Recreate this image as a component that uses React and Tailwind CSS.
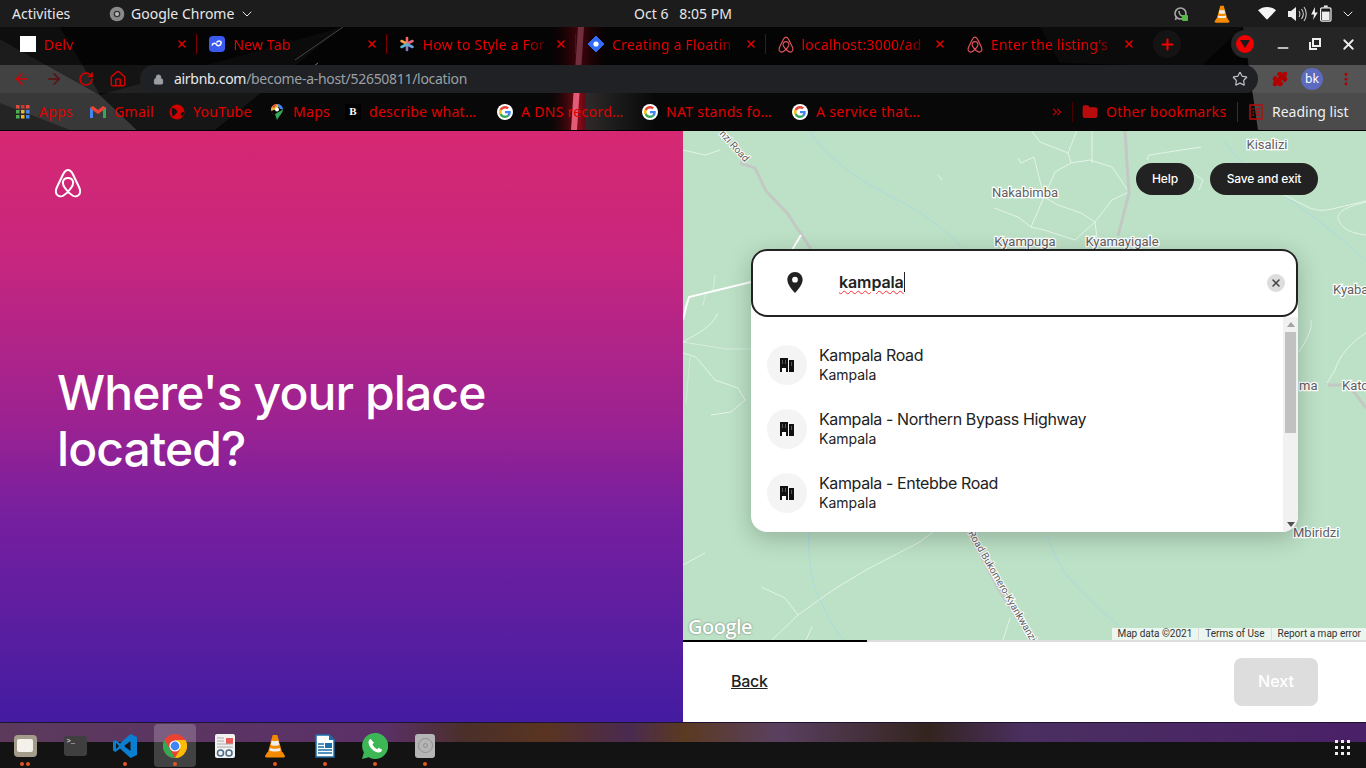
import { ArrowLeft, ArrowRight, RotateCw, House, Lock, Star, Puzzle, EllipsisVertical, Plus, X, Minus, ChevronDown, Folder, ChevronsRight } from 'lucide-react';

const uiFont = { fontFamily: '"Noto Sans", sans-serif' };

function Belo({ className, stroke = 'currentColor', width = 2 }) {
  return (
    <svg viewBox="0 0 28 30" className={className} fill="none" stroke={stroke} strokeWidth={width}>
      <path d="M14 2C11.5 2 10.5 3.5 9 6.5L3 19C1.5 22 1.5 24 2.5 26C4 28.5 7 29 9.5 27.5C12 26 15 23 17 20C19 17.5 19.5 15.5 19 13.5C18.5 11.5 16.5 10 14 10C11.5 10 9.5 11.5 9 13.5C8.5 15.5 9 17.5 11 20C13 23 16 26 18.5 27.5C21 29 24 28.5 25.5 26C26.5 24 26.5 22 25 19L19 6.5C17.5 3.5 16.5 2 14 2Z" />
    </svg>
  );
}

function GoogleIcon() {
  return (
    <span className="flex h-4 w-4 items-center justify-center rounded-full bg-white">
      <svg viewBox="0 0 48 48" className="h-3 w-3">
        <path fill="#EA4335" d="M24 9.5c3.54 0 6.71 1.22 9.21 3.6l6.85-6.85C35.9 2.38 30.47 0 24 0 14.62 0 6.51 5.38 2.56 13.22l7.98 6.19C12.43 13.72 17.74 9.5 24 9.5z" />
        <path fill="#4285F4" d="M46.98 24.55c0-1.57-.15-3.09-.38-4.55H24v9.02h12.94c-.58 2.96-2.26 5.48-4.78 7.18l7.73 6c4.51-4.18 7.09-10.36 7.09-17.65z" />
        <path fill="#FBBC05" d="M10.53 28.59c-.48-1.45-.76-2.99-.76-4.59s.27-3.14.76-4.59l-7.98-6.19C.92 16.46 0 20.12 0 24c0 3.88.92 7.54 2.56 10.78l7.97-6.19z" />
        <path fill="#34A853" d="M24 48c6.48 0 11.93-2.13 16.06-5.81l-7.73-6c-2.15 1.45-4.92 2.3-8.33 2.3-6.26 0-11.57-4.22-13.47-9.91l-7.98 6.19C6.51 42.62 14.62 48 24 48z" />
      </svg>
    </span>
  );
}

function VlcCone({ className }) {
  return (
    <svg viewBox="0 0 24 24" className={className}>
      <path fill="#f58a00" d="M2 22l2.5-4h15l2.5 4c0 1-1 1.500-2 1.500H4c-1 0-2-.5-2-1.500z" />
      <path fill="#f58a00" d="M9.700 1h4.600l5 18c-3 2-11.600 2-14.600 0z" />
      <path fill="#eee" d="M8.700 6.500c1.500.8 5 .8 6.600 0l1 4.500c-2 1-6.600 1-8.600 0zM7 14c1.800 1 8 1 10 0l.6 2.500c-2.500 1.300-8.800 1.300-11.200 0z" />
    </svg>
  );
}

function ChromeLogo({ className }) {
  return (
    <svg viewBox="0 0 24 24" className={className}>
      <circle cx="12" cy="12" r="12" fill="#ea4335" />
      <path fill="#34a853" d="M12 24A12 12 0 0 1 1.600 6l5.200 9 5.200 9z" />
      <path fill="#fbbc05" d="M12 24l5.200-9L12 6h10.400A12 12 0 0 1 12 24z" />
      <circle cx="12" cy="12" r="5.600" fill="#fff" />
      <circle cx="12" cy="12" r="4.400" fill="#4285f4" />
    </svg>
  );
}

function TopBar() {
  return (
    <div style={uiFont} className="flex h-[27px] items-center bg-[#1c1c1c] text-[14px] text-[#e8e8e8]">
      <span className="ml-3 w-[85px]">Activities</span>
      <svg viewBox="0 0 24 24" className="ml-[12px] h-4 w-4">
        <circle cx="12" cy="12" r="11" fill="#8a8a8a" />
        <circle cx="12" cy="12" r="5" fill="#333" />
        <circle cx="12" cy="12" r="3" fill="#bbb" />
      </svg>
      <span className="ml-[6px] w-[108px]">Google Chrome</span>
      <ChevronDown className="h-4 w-4" strokeWidth={1.5} />
      <span className="ml-[378px] w-[100px] whitespace-pre text-center">Oct 6   8:05 PM</span>
      <div className="relative ml-[440px] h-4 w-4">
        <svg viewBox="0 0 16 16" className="h-4 w-4" fill="none">
          <circle cx="7.500" cy="7.500" r="5.500" stroke="#aaa" strokeWidth="1.600" />
          <path d="M2.500 14l1-3.500" stroke="#aaa" strokeWidth="1.600" />
          <path d="M6 5c0 3 2 5 4 5" stroke="#aaa" strokeWidth="1.600" />
          <rect x="9" y="9" width="6" height="6" rx="1" fill="#57b947" />
        </svg>
      </div>
      <VlcCone className="ml-[24px] h-[18px] w-[18px]" />
      <svg viewBox="0 0 20 16" className="ml-[27px] h-[15px] w-[18px]"><path fill="#f5f5f5" d="M10 15L0 4.500C5.500-.5 14.500-.5 20 4.500z" /></svg>
      <svg viewBox="0 0 20 16" className="ml-[11px] h-[16px] w-[20px]" fill="none">
        <path fill="#eee" d="M1 5h3l5-4v14l-5-4H1z" />
        <path d="M12 5c1.200 1.500 1.200 4.500 0 6M14.500 3c2.200 3 2.200 7 0 10M17 1c3 4 3 10 0 14" stroke="#ccc" strokeWidth="1.100" />
      </svg>
      <svg viewBox="0 0 24 18" className="ml-[4px] h-[17px] w-[23px]" fill="none">
        <path fill="#eee" d="M4 2L0 10h3l-1 6 5-8H4z" />
        <rect x="10" y="3" width="11" height="14" rx="1.500" stroke="#eee" strokeWidth="1.300" />
        <rect x="13.500" y="0.500" width="4" height="2" fill="#eee" />
        <rect x="11.500" y="7" width="8" height="9" fill="#eee" />
      </svg>
      <ChevronDown className="ml-[6px] h-4 w-4" strokeWidth={1.5} />
    </div>
  );
}

function ChromeBackdrop() {
  return (
    <svg viewBox="0 0 1366 103" className="absolute inset-0 h-full w-full">
      <defs>
        <linearGradient id="glow" x1="0" x2="1" y1="0" y2="0">
          <stop offset="0" stopColor="#300" stopOpacity="0" />
          <stop offset="0.5" stopColor="#8a0a1a" />
          <stop offset="1" stopColor="#300" stopOpacity="0" />
        </linearGradient>
        <linearGradient id="fadeGrey" x1="0" x2="1" y1="0" y2="0">
          <stop offset="0" stopColor="#2a2a2a" />
          <stop offset="1" stopColor="#2a2a2a" stopOpacity="0" />
        </linearGradient>
      </defs>
      <rect width="1366" height="103" fill="#080808" />
      <polygon points="0,12 100,68 137,103 0,103" fill="#383838" />
      <polygon points="0,76 70,103 0,103" fill="#242424" />
      <polygon points="100,68 343,0 215,103 137,103" fill="#161616" />
      <polygon points="0,0 60,0 100,68 0,12" fill="#1c1c1c" />
      <line x1="343" y1="0" x2="295" y2="33" stroke="#8a8a8a" />
      <line x1="314" y1="39" x2="318" y2="36" stroke="#eee" />
      <rect x="550" y="0" width="58" height="103" fill="url(#glow)" />
      <rect x="585" y="38" width="70" height="65" fill="url(#fadeGrey)" />
      <polygon points="578,0 584,0 577,103 571,103" fill="#e25c78" />
      <polygon points="1040,0 1243,0 1200,40 1060,36" fill="#161616" />
      <polygon points="1243,0 1366,0 1366,103 1258,103" fill="#4b4b4b" />
    </svg>
  );
}

const tabs = [
  { title: 'Delv', icon: <span className="block h-4 w-4 bg-white" />, sep: true },
  {
    title: 'New Tab',
    sep: true,
    icon: (
      <svg viewBox="0 0 16 16" className="h-4 w-4">
        <rect width="16" height="16" rx="4" fill="#3b5bf0" />
        <path d="M3 9.500c1-3 3.500-2.500 4.500-1s3.500 2 4.500-1-3-3-4.500-1" fill="none" stroke="#fff" strokeWidth="1.500" />
      </svg>
    ),
  },
  {
    title: 'How to Style a For',
    sep: true,
    icon: (
      <svg viewBox="0 0 16 16" className="h-4 w-4" strokeWidth="2.600" strokeLinecap="round">
        <path d="M8 2v5" stroke="#ef6f5e" />
        <path d="M2.500 5l5 2.500" stroke="#f0a14a" />
        <path d="M13.500 5l-5 2.500" stroke="#e5657f" />
        <path d="M8 14V9" stroke="#8a7bc8" />
        <path d="M2.500 11l5-2.500" stroke="#5db5c5" />
        <path d="M13.500 11l-5-2.500" stroke="#6aa5d8" />
      </svg>
    ),
  },
  {
    title: 'Creating a Floatin',
    sep: true,
    icon: (
      <svg viewBox="0 0 16 16" className="h-4 w-4">
        <path d="M8 0l8 8-8 8-8-8z" fill="#2f6bf5" stroke="#2f6bf5" strokeLinejoin="round" />
        <circle cx="8" cy="8" r="2.600" fill="#fff" />
      </svg>
    ),
  },
  { title: 'localhost:3000/ad', sep: false, icon: <Belo className="h-[17px] w-4" stroke="#e8545a" /> },
  { title: "Enter the listing's", sep: false, icon: <Belo className="h-[17px] w-4" stroke="#e8545a" /> },
];

function TabStrip() {
  return (
    <div className="relative flex h-[38px] items-center bg-black/50 pb-1 pl-2 text-[14px] tracking-[0.2px] text-[#e60000]">
      {tabs.map((tab) => (
        <div key={tab.title} className="flex h-[26px] w-[189.400px] shrink-0 items-center pl-3 pr-2">
          <span className="mr-2 shrink-0">{tab.icon}</span>
          <span className="min-w-0 flex-1 whitespace-nowrap [mask-image:linear-gradient(to_right,black_78%,transparent_98%)]">{tab.title}</span>
          <X className="h-3 w-3 shrink-0" strokeWidth={3} />
          {tab.sep ? <span className="-mr-2 ml-2 h-5 w-px shrink-0 bg-[#7a0000]" /> : <span className="-mr-2 ml-2 h-5 w-px shrink-0" />}
        </div>
      ))}
      <div className="ml-[9px] flex h-7 w-7 items-center justify-center rounded-full bg-[#141414]">
        <Plus className="h-[17px] w-[17px] text-[#f00000]" strokeWidth={3} />
      </div>
      <div className="ml-[50px] flex h-7 w-7 items-center justify-center rounded-full bg-[#262626]">
        <span className="flex h-[18px] w-[18px] items-center justify-center rounded-full bg-[#f00000]">
          <svg viewBox="0 0 10 8" className="h-2 w-[10px]"><path d="M0 0h10L5 8z" fill="#1a1a1a" /></svg>
        </span>
      </div>
      <Minus className="ml-4 h-4 w-4 translate-y-1 text-[#eee]" strokeWidth={2.500} />
      <svg viewBox="0 0 12 12" className="ml-[18px] h-3 w-3" fill="none" stroke="#eee" strokeWidth="2"><rect x="4" y="1" width="7" height="7" /><path d="M1 4v7h7" /></svg>
      <X className="ml-[19px] h-[17px] w-[17px] text-[#eee]" strokeWidth={2.500} />
    </div>
  );
}

function Toolbar() {
  return (
    <div className="relative flex h-[28px] items-center bg-white/5 pl-[6px]">
      <span className="flex w-8 justify-center"><ArrowLeft className="h-[18px] w-[18px] text-[#d40000]" strokeWidth={2} /></span>
      <span className="flex w-8 justify-center"><ArrowRight className="h-[18px] w-[18px] text-[#5e0e0e]" strokeWidth={2} /></span>
      <span className="flex w-8 justify-center"><RotateCw className="h-4 w-4 text-[#d40000]" strokeWidth={2.500} /></span>
      <span className="flex w-8 justify-center"><House className="h-[18px] w-[18px] text-[#d40000]" strokeWidth={2} /></span>
      <div className="ml-[6px] flex h-[28px] w-[1118px] items-center rounded-full bg-[#202124] pl-[13px] pr-[10px]">
        <Lock className="h-[11px] w-[11px] fill-[#9aa0a6] text-[#9aa0a6]" />
        <span style={uiFont} className="ml-[10px] pb-px text-[14px] tracking-[-0.3px] text-[#9aa0a6]"><span className="text-[#e8eaed]">airbnb.com</span>/become-a-host/52650811/location</span>
        <Star className="ml-auto h-4 w-4 text-[#bdc1c6]" strokeWidth={1.800} />
      </div>
      <span className="ml-[5px] flex w-[33px] justify-center"><Puzzle className="h-4 w-4 fill-[#b00000] text-[#b00000]" /></span>
      <span style={uiFont} className="ml-[5px] flex h-[22px] w-[22px] items-center justify-center rounded-full bg-[#5c6bc0] text-[12px] text-white">bk</span>
      <EllipsisVertical className="ml-[15px] h-4 w-4 text-[#b00000]" strokeWidth={2.500} />
    </div>
  );
}

const bookmarks = [
  {
    label: 'Apps',
    w: 'w-[75px]',
    icon: (
      <svg viewBox="0 0 14 14" className="h-[14px] w-[14px]">
        <rect x="0" y="0" width="3.500" height="3.500" fill="#e04b3f" /><rect x="5" y="0" width="3.500" height="3.500" fill="#d0352e" /><rect x="10" y="0" width="3.500" height="3.500" fill="#e04b3f" />
        <rect x="0" y="5" width="3.500" height="3.500" fill="#4caf50" /><rect x="5" y="5" width="3.500" height="3.500" fill="#e8b13a" /><rect x="10" y="5" width="3.500" height="3.500" fill="#4285f4" />
        <rect x="0" y="10" width="3.500" height="3.500" fill="#4caf50" /><rect x="5" y="10" width="3.500" height="3.500" fill="#f0b429" /><rect x="10" y="10" width="3.500" height="3.500" fill="#4285f4" />
      </svg>
    ),
  },
  {
    label: 'Gmail',
    w: 'w-[79px]',
    icon: (
      <svg viewBox="0 0 16 12" className="h-3 w-4">
        <path d="M0 1.500V12h3V4z" fill="#4285f4" />
        <path d="M16 1.500V12h-3V4z" fill="#34a853" />
        <path d="M0 1.500L3 0l5 4 5-4 3 1.500L13 4.500 8 8 3 4.500z" fill="#ea4335" />
      </svg>
    ),
  },
  {
    label: 'YouTube',
    w: 'w-[100px]',
    icon: (
      <svg viewBox="0 0 16 16" className="h-4 w-4">
        <circle cx="8" cy="8" r="7.500" fill="#d00000" />
        <path d="M3 4c2 0 4 1 5 3S6 10 5 12 2 9 3 4zM12 11c-1-2 0-3 3-3 0 3-1 5-3 3z" fill="#111" />
      </svg>
    ),
  },
  {
    label: 'Maps',
    w: 'w-[76px]',
    icon: (
      <svg viewBox="0 0 12 16" className="h-4 w-[14px]">
        <path d="M6 16C4 12 0 9 0 5.500 0 2.500 2.500 0 6 0l3 1-3 4-6 2z" fill="#e8b13a" />
        <path d="M6 0c3.500 0 6 2.500 6 5.500L9 5z" fill="#4285f4" />
        <path d="M1 3c1-2 3-3 5-3L3 4z" fill="#ea4335" />
        <path d="M6 16c2-4 6-7 6-10.500L4 10z" fill="#34a853" />
        <circle cx="6" cy="5.500" r="2" fill="#fff" />
      </svg>
    ),
  },
  {
    label: 'describe what…',
    w: 'w-[152px]',
    icon: <span className="flex h-4 w-4 items-center justify-center bg-black text-[11px] font-bold text-white [font-family:'Liberation_Serif',serif]">B</span>,
  },
  { label: 'A DNS record…', w: 'w-[145px]', icon: <GoogleIcon /> },
  { label: 'NAT stands fo…', w: 'w-[150px]', icon: <GoogleIcon /> },
  { label: 'A service that…', w: 'w-[150px]', icon: <GoogleIcon /> },
];

function BookmarksBar() {
  return (
    <div style={uiFont} className="relative flex h-[37px] items-center pl-[15px] text-[14px] tracking-[0.3px] text-[#e00000]">
      {bookmarks.map((b) => (
        <div key={b.label} className={`flex shrink-0 items-center whitespace-nowrap ${b.w}`}>
          <span className="flex w-4 justify-center">{b.icon}</span>
          <span className="ml-2">{b.label}</span>
        </div>
      ))}
      <ChevronsRight className="ml-[108px] h-[14px] w-[14px] text-[#c80000]" />
      <span className="ml-2 h-5 w-px bg-[#4a0000]" />
      <Folder className="ml-[9px] h-4 w-4 fill-[#b80c0c] text-[#b80c0c]" />
      <span className="ml-2 w-[121px] whitespace-nowrap">Other bookmarks</span>
      <span className="ml-[10px] h-5 w-px bg-[#5a2020]" />
      <svg viewBox="0 0 14 16" className="ml-[11px] h-4 w-[14px]" fill="none" stroke="#b80c0c" strokeWidth="1.500">
        <rect x="1" y="1" width="12" height="14" />
        <path d="M3.500 5h1.500M7 5h4M3.500 8h1.500M7 8h4M3.500 11h1.500M7 11h4" />
      </svg>
      <span className="ml-[9px] whitespace-nowrap tracking-normal text-[#f0f0f0]">Reading list</span>
    </div>
  );
}

function MapCanvas() {
  const label = 'fill-[#5f5f5f] stroke-white stroke-[2.500px] [paint-order:stroke] text-[13px]';
  const roadLabel = 'fill-[#5f5f5f] stroke-white stroke-2 [paint-order:stroke] text-[10px]';
  return (
    <svg viewBox="0 0 683 510" className="absolute inset-x-0 -top-px h-[510px] w-full [font-family:Roboto,sans-serif]" fill="none">
      <g stroke="#aadbe0" strokeWidth="1">
        <path d="M126 0C140 25 175 50 209 67C240 82 262 100 279 117" />
        <path d="M540 10C560 35 575 48 597 63C630 85 660 110 683 130" />
        <path d="M126 400C125 415 126 430 128 440C130 455 134 465 139 473C146 490 152 500 161 510" />
        <path d="M365 407C370 425 378 438 388 450C405 468 425 488 438 497" />
      </g>
      <g stroke="#edf7f0" strokeWidth="0.800">
        <path d="M0 20L22 25L37 20" />
        <path d="M255 45L259 50" />
        <path d="M348 0L357 12L385 23L388 33L372 42L361 67L375 75L398 83L412 92L429 70L446 62L429 37L407 30L388 33" />
        <path d="M335 28L338 33L351 27L361 67L348 97L335 87L311 78" />
        <path d="M348 97L361 100L392 110L412 92L414 108" />
        <path d="M394 0L385 23M409 0V33" />
        <path d="M466 25L518 17M464 30L466 25" />
        <path d="M510 43L520 50L516 60" />
        <path d="M597 63L627 78C638 82 645 80 653 78L683 71M683 72C668 76 655 80 655 88C658 98 666 103 683 105" />
        <path d="M628 190C630 200 622 212 616 222M683 203C668 212 656 226 652 240L644 253" />
        <path d="M32 145L30 162M23 163L20 175" strokeOpacity=".7" />
        <path d="M0 212C15 203 28 198 35 183" />
        <path d="M0 212L43 219H68" strokeOpacity=".7" />
        <path d="M0 223L13 227L32 250L55 258L62 270L48 282L28 285" />
        <path d="M7 227L3 273" strokeOpacity=".6" />
        <path d="M0 435L22 423M78 457L102 468L115 485" />
        <path d="M89 510L115 485L150 460L183 440L235 413L250 402" />
        <path d="M129 497L123 510" />
        <path d="M327 488L320 510" />
      </g>
      <g stroke="#c4c8c4" strokeWidth="3" fill="none">
        <path d="M57 33L72 38L83 61L104 83L128 119" />
        <path d="M442 0L444 33L446 63L435 106" />
        <path d="M285 402L318 463L348 510" />
        <path d="M645 255H660M660 255L672 263L683 278" />
      </g>
      <path d="M68 152L6 167L3 177L0 190" stroke="#fff" strokeWidth="2" />
      <path d="M118 105L106 125" stroke="#fff" strokeWidth="2" />
      <text x="584" y="19" textAnchor="middle" className={label}>Kisalizi</text>
      <text x="342" y="67" textAnchor="middle" className={label}>Nakabimba</text>
      <text x="342" y="116" textAnchor="middle" className={label}>Kyampuga</text>
      <text x="439" y="116" textAnchor="middle" className={label}>Kyamayigale</text>
      <text x="650" y="164" className={label}>Kyaba</text>
      <text x="616" y="260" className={label}>ma</text>
      <text x="659" y="260" className={label}>Kato</text>
      <text x="610" y="407" className={label}>Mbiridzi</text>
      <text transform="translate(36 4) rotate(48)" className={roadLabel}>nzi Road</text>
      <text transform="translate(285 403) rotate(60)" className={roadLabel}>Road Bukomero-Kyankwanzi</text>
    </svg>
  );
}

function BuildingIcon() {
  return (
    <svg viewBox="0 0 14 14" className="h-[14px] w-[14px]">
      <path fill="#111" d="M0 0h8v14H0zM9 2h5v12H9z" />
      <path fill="#555" d="M2 2h1v4H2zM5 2h1v4H5zM11 4h1v4h-1z" />
      <path fill="#fff" d="M2 10h4v4H2z" />
    </svg>
  );
}

const suggestions = ['Kampala Road', 'Kampala - Northern Bypass Highway', 'Kampala - Entebbe Road'];

function SearchCard() {
  return (
    <div className="absolute left-[68px] top-[118px] w-[547px] rounded-2xl bg-white shadow-[0_6px_24px_rgba(0,0,0,0.22)]">
      <div className="relative z-10 flex h-[68px] items-center rounded-2xl border-2 border-[#222] bg-white pb-px pl-[34px] pr-[11px]">
        <svg viewBox="0 0 16 22" className="h-[21px] w-4">
          <path fill="#222" d="M8 0C3.600 0 0 3.500 0 8c0 5 5 10.500 8 14 3-3.500 8-9 8-14 0-4.500-3.600-8-8-8z" />
          <circle cx="8" cy="8" r="3" fill="#fff" />
        </svg>
        <span className="ml-[36px] -translate-y-px border-r border-[#222] text-[16px] font-semibold leading-5 tracking-[-0.1px] text-[#222] underline decoration-red-500 decoration-wavy decoration-1 underline-offset-2">kampala</span>
        <span className="ml-auto flex h-[18px] w-[18px] items-center justify-center rounded-full bg-[#ddd]">
          <X className="h-3 w-3 text-[#444]" strokeWidth={3} />
        </span>
      </div>
      <div className="flex h-[215px] overflow-hidden rounded-b-2xl">
        <div className="flex flex-1 flex-col gap-6 pl-4 pt-7">
          {suggestions.map((s) => (
            <div key={s} className="flex items-center">
              <span className="flex h-10 w-10 items-center justify-center rounded-full bg-[#f4f4f4]"><BuildingIcon /></span>
              <div className="ml-3">
                <div className="text-[16px] leading-5 tracking-[-0.38px] text-[#222]">{s}</div>
                <div className="text-[14px] leading-5 text-[#222]">Kampala</div>
              </div>
            </div>
          ))}
        </div>
        <div className="flex w-[15px] flex-col items-center bg-[#f1f1f1]">
          <svg viewBox="0 0 8 5" className="mt-[5px] h-[5px] w-2"><path d="M4 0l4 5H0z" fill="#a3a3a3" /></svg>
          <span className="mt-[5px] h-[101px] w-[11px] bg-[#c1c1c1]" />
          <svg viewBox="0 0 8 5" className="mb-[5px] mt-auto h-[5px] w-2"><path d="M4 5L0 0h8z" fill="#505050" /></svg>
        </div>
      </div>
    </div>
  );
}

function Dock() {
  const dot = 'h-[4px] w-[4px] rounded-full bg-[#e95420]';
  const items = [
    {
      dots: 2,
      icon: (
        <span className="flex h-[22px] w-[23px] items-center justify-center rounded-[4px] bg-[#a39c8b]">
          <span className="h-[13px] w-[16px] rounded-[2px] bg-[#f4f1ea]" />
        </span>
      ),
    },
    {
      dots: 0,
      icon: (
        <span className="block h-5 w-[23px] rounded-[3px] bg-[#3f3f3f] pl-[3px] text-[7px] leading-[10px] text-white [font-family:'Liberation_Mono',monospace]">&gt;_</span>
      ),
    },
    {
      dots: 1,
      icon: (
        <svg viewBox="0 0 24 24" className="h-[24px] w-[24px]">
          <path fill="#0a7fd1" d="M17.500 0L24 3v18l-6.500 3L7 14.500 2.500 18 0 16.500V7.500L2.500 6 7 9.500zM17.500 7L11 12l6.500 5zM3 9v6l3-3z" />
        </svg>
      ),
    },
    { dots: 1, active: true, icon: <ChromeLogo className="h-6 w-6" /> },
    {
      dots: 0,
      icon: (
        <svg viewBox="0 0 20 24" className="h-6 w-5">
          <rect width="20" height="24" rx="2" fill="#f1f1f1" />
          <rect x="11" y="4" width="7" height="6" fill="#ea5a56" />
          <path d="M2 4h7M2 7h7M2 10h16M2 13h16" stroke="#aaa" />
          <circle cx="5.500" cy="19" r="3" fill="none" stroke="#4b6b8a" strokeWidth="1.500" />
          <circle cx="14" cy="19" r="3" fill="none" stroke="#4b6b8a" strokeWidth="1.500" />
        </svg>
      ),
    },
    { dots: 1, icon: <VlcCone className="h-6 w-6" /> },
    {
      dots: 1,
      icon: (
        <svg viewBox="0 0 20 24" className="h-6 w-5">
          <path fill="#fff" stroke="#1a6fa8" strokeWidth="1.500" d="M1 1h13l5 5v17H1z" />
          <path fill="#1a6fa8" d="M14 0l6 6h-6z" />
          <path stroke="#1a6fa8" strokeWidth="1.500" d="M3 10h6M3 13h6M3 16h14M3 19h14" />
          <rect x="10" y="9" width="7" height="5" fill="#1a6fa8" />
        </svg>
      ),
    },
    {
      dots: 1,
      icon: (
        <svg viewBox="0 0 24 24" className="h-[26px] w-[26px]">
          <path fill="#3db755" d="M12 0a12 12 0 0 0-10.300 18L0 24l6.200-1.600A12 12 0 1 0 12 0z" />
          <path fill="#fff" d="M8 5.500c-1 0-2 1.500-2 3 0 4 5 9.500 9.500 9.500 1.500 0 3-1 3-2.500l-3-1.800-1.500 1.300c-2-.8-3.500-2.500-4.300-4.300L11 9z" />
        </svg>
      ),
    },
    {
      dots: 1,
      icon: (
        <span className="flex h-6 w-[20px] items-center justify-center rounded-[3px] bg-[#b5b5b5]">
          <span className="flex h-[15px] w-[15px] items-center justify-center rounded-full border border-[#8f8f8f]">
            <span className="h-[5px] w-[5px] rounded-full border border-[#8f8f8f]" />
          </span>
        </span>
      ),
    },
  ];

  return (
    <div className="relative h-[46px] border-t border-[#1c1430] bg-[linear-gradient(to_bottom,transparent_19px,#131313_19px),linear-gradient(to_right,#5c3a5c_0%,#5b3068_28%,#4a2f2a_34%,#5a3420_40%,#4a2a50_46%,#5a3a20_50%,#5a4060_57%,#33241f_68%,#4a2f60_75%,#4a2068_100%)]">
      <div className="flex h-full items-center">
        {items.map((item, i) => (
          <div key={i} className="relative flex h-full w-[50px] shrink-0 items-center justify-center">
            {item.active && <span className="absolute inset-x-1 bottom-[1px] top-[1px] rounded-[4px] bg-white/20" />}
            <span className="relative">{item.icon}</span>
            <span className="absolute bottom-[2px] flex gap-[2px]">
              {Array.from({ length: item.dots }).map((_, d) => (
                <span key={d} className={dot} />
              ))}
            </span>
          </div>
        ))}
        <div className="ml-auto mr-[16px] grid translate-y-[2px] grid-cols-3 gap-[3px]">
          {Array.from({ length: 9 }).map((_, i) => (
            <span key={i} className="h-[3px] w-[3px] bg-[#eee]" />
          ))}
        </div>
      </div>
    </div>
  );
}

export default function App() {
  return (
    <div className="flex h-[768px] w-[1366px] flex-col overflow-hidden bg-black [font-family:Inter,sans-serif]">
      <TopBar />
      <div className="relative h-[103px]">
        <ChromeBackdrop />
        <div style={uiFont}>
          <TabStrip />
          <Toolbar />
        </div>
        <BookmarksBar />
      </div>

      <main className="flex h-[592px] border-t border-black">
        <section className="flex w-[683px] flex-col bg-[linear-gradient(180deg,#d62872_0%,#c9267d_20%,#9a2292_50%,#761f9f_65%,#431ca1_100%)] pl-[54px]">
          <Belo className="mt-[37px] h-[30px] w-7 text-white" />
          <h1 className="ml-[3px] mt-[167px] text-[48px] font-medium leading-[56px] tracking-[-0.9px] text-white">Where's your place<br />located?</h1>
        </section>

        <section className="flex w-[683px] flex-col">
          <div className="relative h-[509px] overflow-hidden bg-[#bce1c6]">
            <MapCanvas />
            <div className="absolute right-[48px] top-[32px] flex gap-4 text-[12px] font-medium tracking-[-0.15px] text-white">
              <span className="flex h-8 w-[58px] items-center justify-center rounded-full bg-[#222]">Help</span>
              <span className="flex h-8 w-[108px] items-center justify-center rounded-full bg-[#222]">Save and exit</span>
            </div>
            <SearchCard />
            <span className="absolute bottom-[1px] left-[5px] text-[20px] font-semibold leading-6 tracking-[-0.5px] text-white [font-family:'Open_Sans',sans-serif] [text-shadow:0_0_2px_rgba(0,0,0,0.5)]">Google</span>
            <div className="absolute bottom-0 right-0 flex h-[12px] items-center bg-white/70 px-[5px] text-[10px] leading-3 text-[#333] [font-family:Roboto,sans-serif]">
              <span>Map data ©2021</span>
              <span className="ml-[6px] border-l border-[#ddd] pl-[6px]">Terms of Use</span>
              <span className="ml-[6px] border-l border-[#ddd] pl-[6px]">Report a map error</span>
            </div>
          </div>
          <div className="flex h-[2px] bg-[#ddd]"><span className="w-[184px] bg-black" /></div>
          <div className="flex h-[80px] items-center justify-between bg-white pl-12 pr-12">
            <span className="pb-[2px] text-[16px] font-medium tracking-[-0.3px] text-[#222] underline">Back</span>
            <span className="flex h-12 w-[84px] items-center justify-center rounded-lg bg-[#ddd] pb-[2px] text-[16px] font-medium text-white">Next</span>
          </div>
        </section>
      </main>

      <Dock />
    </div>
  );
}
